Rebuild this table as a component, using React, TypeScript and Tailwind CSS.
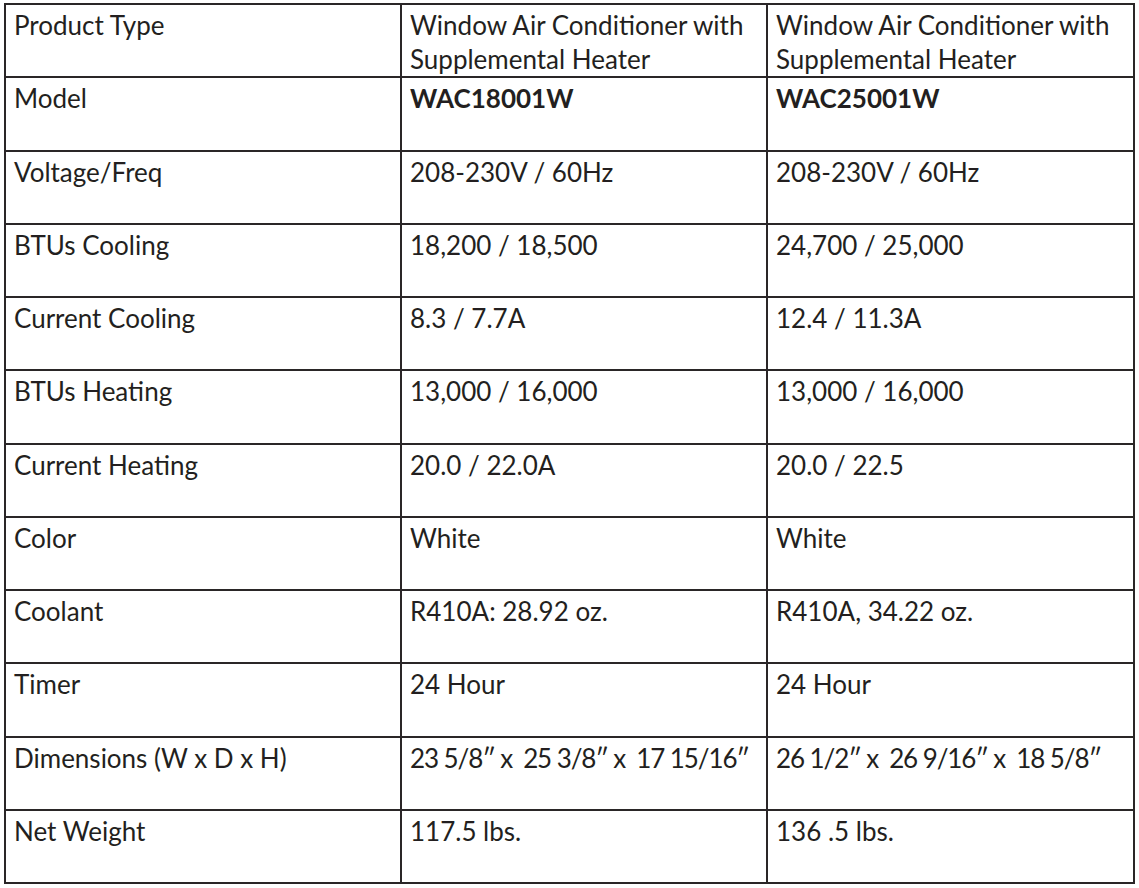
import React from "react";

type Row = { label: string; a: string; b: string; bold?: boolean; tight?: boolean };

const rows: Row[] = [
    {
        label: "Product Type",
        a: "Window Air Conditioner with Supplemental Heater",
        b: "Window Air Conditioner with Supplemental Heater",
    },
    { label: "Model", a: "WAC18001W", b: "WAC25001W", bold: true },
    { label: "Voltage/Freq", a: "208-230V / 60Hz", b: "208-230V / 60Hz" },
    { label: "BTUs Cooling", a: "18,200 / 18,500", b: "24,700 / 25,000" },
    { label: "Current Cooling", a: "8.3 / 7.7A", b: "12.4 / 11.3A" },
    { label: "BTUs Heating", a: "13,000 / 16,000", b: "13,000 / 16,000" },
    { label: "Current Heating", a: "20.0 / 22.0A", b: "20.0 / 22.5" },
    { label: "Color", a: "White", b: "White" },
    { label: "Coolant", a: "R410A: 28.92 oz.", b: "R410A, 34.22 oz." },
    { label: "Timer", a: "24 Hour", b: "24 Hour" },
    {
        label: "Dimensions (W x D x H)",
        a: "23 5/8\u2033 x  25 3/8\u2033 x  17 15/16\u2033",
        b: "26 1/2\u2033 x  26 9/16\u2033 x  18 5/8\u2033",
        tight: true,
    },
    { label: "Net Weight", a: "117.5 lbs.", b: "136 .5 lbs." },
];

const cell =
    "border-2 border-[#2a2627] align-top pl-[8px] pr-[4px] pt-[3px] whitespace-pre-wrap";

export default function App() {
    return (
        <div className="bg-white w-[1139px] h-[888px] pt-[3px] pl-[4px]">
            <table
                className="border-collapse text-[26px] leading-[34px] text-[#231f20]"
                style={{ fontFamily: "Lato, 'Liberation Sans', sans-serif" }}
            >
                <colgroup>
                    <col className="w-[396px]" />
                    <col className="w-[366px]" />
                    <col className="w-[367px]" />
                </colgroup>
                <tbody>
                    {rows.map((r) => {
                        const extra = `${r.bold ? "font-bold" : ""} ${
                            r.tight ? "tracking-[-1.1px] whitespace-nowrap" : ""
                        }`;
                        return (
                            <tr key={r.label} className="h-[73.25px]">
                                <td className={cell}>{r.label}</td>
                                <td className={`${cell} ${extra}`}>{r.a}</td>
                                <td className={`${cell} ${extra}`}>{r.b}</td>
                            </tr>
                        );
                    })}
                </tbody>
            </table>
        </div>
    );
}
